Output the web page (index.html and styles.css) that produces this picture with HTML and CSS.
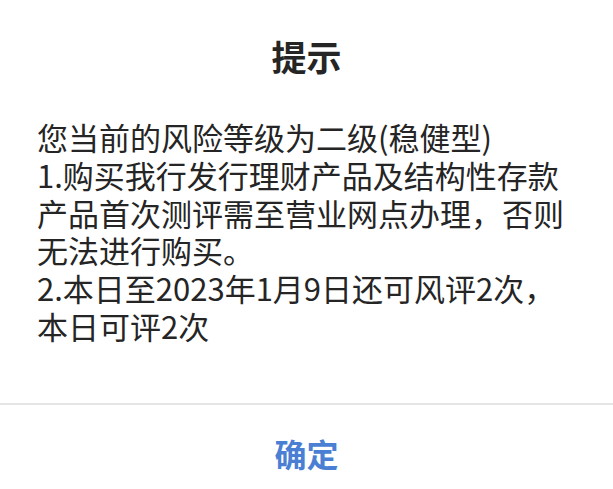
FILE: index.html
```html
<!DOCTYPE html>
<html lang="zh-CN">
<head>
<meta charset="utf-8">
<title>提示</title>
<link rel="stylesheet" href="styles.css">
</head>
<body>
<div class="dialog">
  <div class="content">
    <h1 class="title">提示</h1>
    <p class="message">您当前的风险等级为二级(稳健型)<br>1.购买我行发行理财产品及结构性存款<br>产品首次测评需至营业网点办理，否则<br>无法进行购买。<br>2.本日至2023年1月9日还可风评2次，<br>本日可评2次</p>
  </div>
  <div class="footer">
    <button class="confirm" type="button">确定</button>
  </div>
</div>
</body>
</html>
```
FILE: styles.css
```css
html, body {
  margin: 0;
  padding: 0;
  background: #ffffff;
}
body {
  width: 613px;
  height: 489px;
  overflow: hidden;
  font-family: "Noto Sans CJK SC", "Noto Sans", sans-serif;
  color: #252525;
}
.dialog {
  display: flex;
  flex-direction: column;
  height: 489px;
}
.content {
  box-sizing: border-box;
  padding: 34px 0 0 37px;
  height: 403px;
}
.title {
  margin: 0 0 0 -37px;
  text-align: center;
  font-size: 35px;
  line-height: 44px;
  font-weight: 700;
  color: #252525;
}
.message {
  margin: 40px 0 0 0;
  font-size: 31px;
  line-height: 37.8px;
  white-space: nowrap;
  color: #252525;
}
.footer {
  border-top: 2px solid #e6e6e6;
  flex: 1;
}
.confirm {
  display: block;
  width: 100%;
  margin: 0;
  padding: 27px 0 0 0;
  border: none;
  background: transparent;
  font-family: "Noto Sans CJK SC", "Noto Sans", sans-serif;
  font-size: 32px;
  line-height: 42px;
  font-weight: 700;
  color: #4a7fd3;
  text-align: center;
}
```
